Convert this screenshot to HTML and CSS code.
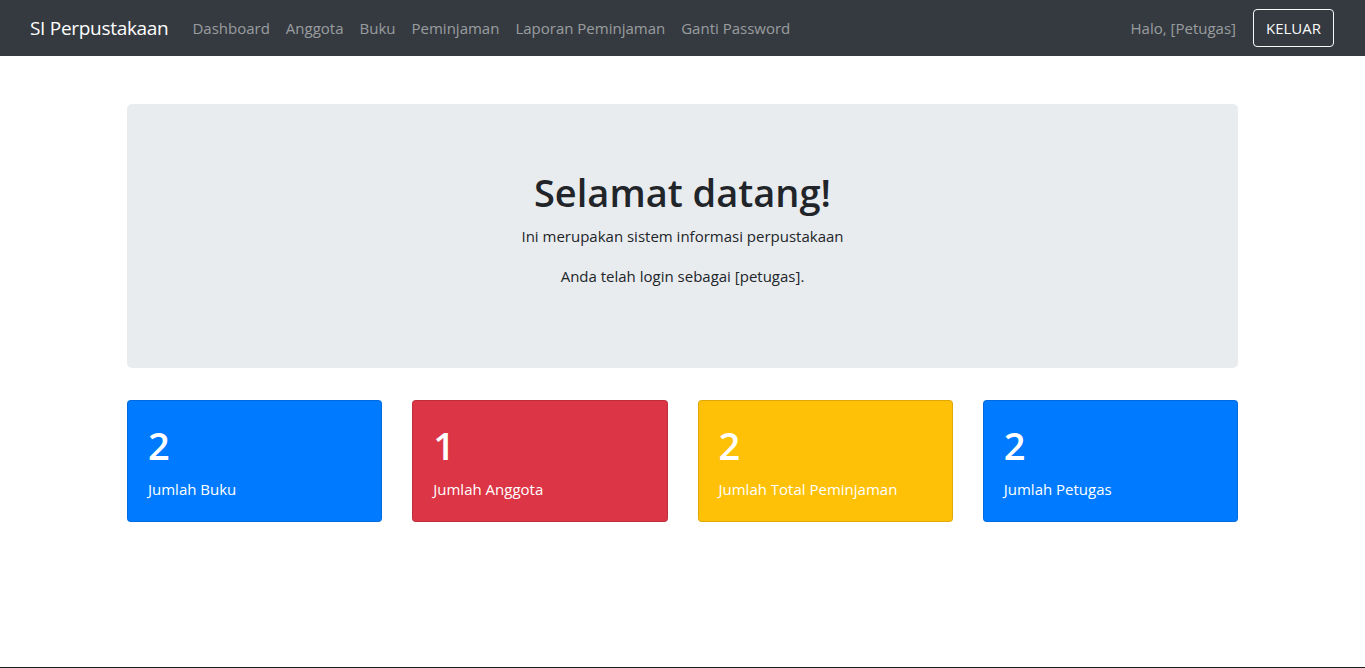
FILE: index.html
```html
<!DOCTYPE html>
<html lang="id">
<head>
<meta charset="utf-8">
<title>SI Perpustakaan</title>
<link rel="stylesheet" href="styles.css">
</head>
<body>
<nav class="navbar">
  <div class="nav-inner">
    <a class="brand" href="#">SI Perpustakaan</a>
    <ul class="nav-links">
      <li><a href="#">Dashboard</a></li>
      <li><a href="#">Anggota</a></li>
      <li><a href="#">Buku</a></li>
      <li><a href="#">Peminjaman</a></li>
      <li><a href="#">Laporan Peminjaman</a></li>
      <li><a href="#">Ganti Password</a></li>
    </ul>
    <div class="nav-right">
      <span class="nav-text">Halo, [Petugas]</span>
      <a class="btn-outline" href="#">KELUAR</a>
    </div>
  </div>
</nav>
<main class="container">
  <section class="jumbotron">
    <h1 class="jumbo-title">Selamat datang!</h1>
    <p class="lead-small">Ini merupakan sistem informasi perpustakaan</p>
    <p>Anda telah login sebagai [petugas].</p>
  </section>
  <section class="stats">
    <div class="card card-primary">
      <div class="card-number">2</div>
      <p class="card-label">Jumlah Buku</p>
    </div>
    <div class="card card-danger">
      <div class="card-number">1</div>
      <p class="card-label">Jumlah Anggota</p>
    </div>
    <div class="card card-warning">
      <div class="card-number">2</div>
      <p class="card-label">Jumlah Total Peminjaman</p>
    </div>
    <div class="card card-primary">
      <div class="card-number">2</div>
      <p class="card-label">Jumlah Petugas</p>
    </div>
  </section>
</main>
</body>
</html>
```
FILE: styles.css
```css
* { box-sizing: border-box; }
html, body { margin: 0; padding: 0; }
body {
  font-family: "Open Sans", "Noto Sans", sans-serif;
  font-size: 15px;
  line-height: 1.5;
  color: #212529;
  background: #fff;
  height: 668px;
  border-bottom: 1px solid #1d1f22;
}
a { text-decoration: none; }

.navbar {
  background: #343a40;
  height: 56px;
  padding: 0 31px 0 30px;
}
.nav-inner {
  display: flex;
  align-items: center;
  height: 56px;
}
.brand {
  color: #fff;
  font-size: 19px;
  margin-right: 16px;
  letter-spacing: -0.3px;
}
.nav-links {
  list-style: none;
  display: flex;
  margin: 0;
  padding: 0;
}
.nav-links a {
  display: block;
  padding: 8px 8px;
  color: rgba(255,255,255,.5);
  letter-spacing: 0;
}
.nav-right {
  margin-left: auto;
  display: flex;
  align-items: center;
  gap: 17px;
}
.nav-text {
  color: rgba(255,255,255,.5);
  letter-spacing: 0;
}
.btn-outline {
  display: inline-block;
  color: #f8f9fa;
  border: 1px solid #f8f9fa;
  border-radius: 4px;
  padding: 6px 12px;
  line-height: 24px;
  height: 38px;
}

.container {
  width: 1111px;
  margin: 48px auto 0;
}
.jumbotron {
  background: #e9ecef;
  border-radius: 5px;
  padding: 64px 32px;
  text-align: center;
}
.jumbo-title {
  margin: 0 0 8px;
  font-size: 38px;
  font-weight: 600;
  line-height: 48px;
}
.jumbotron p {
  margin: 0 0 16px;
  line-height: 24px;
}

.stats {
  display: grid;
  grid-template-columns: repeat(4, 1fr);
  gap: 30px;
  margin-top: 32px;
}
.card {
  border: 1px solid rgba(0,0,0,.125);
  border-radius: 4px;
  padding: 20px;
  color: #fff;
  height: 122px;
}
.card-primary { background: #007bff; }
.card-danger { background: #dc3545; }
.card-warning { background: #ffc107; }
.card-number {
  font-size: 38px;
  font-weight: 600;
  line-height: 48px;
  margin-bottom: 8px;
}
.card-label {
  margin: 0;
  line-height: 24px;
}
```
